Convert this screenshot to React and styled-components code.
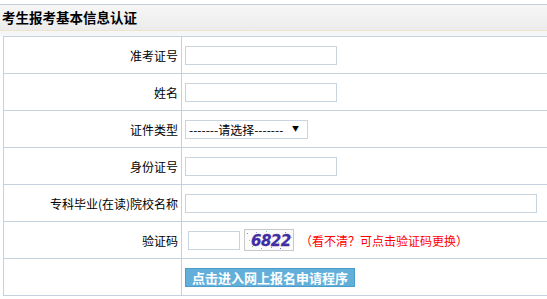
import React from 'react';
import styled, { createGlobalStyle } from 'styled-components';

const GlobalStyle = createGlobalStyle`
  html, body {
    margin: 0;
    padding: 0;
    background: #fff;
    overflow: hidden;
  }
  body {
    font-family: "Noto Sans CJK SC", "Liberation Sans", sans-serif;
    font-size: 12px;
    color: #000;
  }
  * { box-sizing: border-box; }
`;

const Page = styled.div`
  width: 100%;
  padding-top: 4px;
`;

const Header = styled.div`
  height: 27px;
  border-top: 1px solid #bfd0dc;
  border-bottom: 1px solid #efe3c9;
  background: linear-gradient(#f6f6f6, #ececec);
  display: flex;
  align-items: center;
  padding-left: 2px;
`;

const Title = styled.h3`
  margin: 0;
  font-size: 13.5px;
  font-weight: bold;
  line-height: 1;
`;

const Strip = styled.div`
  height: 5px;
  background: #f5f6f8;
`;

const Form = styled.div`
  margin-left: 3px;
  border-left: 1px solid #c3d2de;
  border-top: 1px solid #c3d2de;
`;

const Row = styled.div`
  display: grid;
  grid-template-columns: 178px 1fr;
  height: 37px;
  border-bottom: 1px solid #c3d2de;
`;

const Label = styled.label`
  border-right: 1px solid #c3d2de;
  display: flex;
  align-items: center;
  justify-content: flex-end;
  padding-right: 3px;
`;

const Field = styled.div`
  display: flex;
  align-items: center;
  padding-left: 3px;
`;

const Input = styled.input`
  width: ${(p) => p.w || 152}px;
  height: 19px;
  margin: 0 0 0 ${(p) => p.ml || 0}px;
  border: 1px solid #c6d5e0;
  padding: 0 3px;
  font: inherit;
  outline: none;
`;

const SelectBox = styled.div`
  position: relative;
  width: 123px;
  height: 19px;
`;

const Select = styled.select`
  appearance: none;
  width: 100%;
  height: 100%;
  border: 1px solid #c6d5e0;
  background: #fff;
  padding: 0 0 0 3px;
  font: inherit;
  font-size: 12px;
  color: #000;
  outline: none;
`;

const Arrow = styled.span`
  position: absolute;
  right: 9px;
  top: 5px;
  font-size: 7px;
  line-height: 1;
  pointer-events: none;
`;

const Captcha = styled.svg`
  display: block;
  margin-left: 4px;
  cursor: pointer;
`;

const Hint = styled.span`
  color: #f00;
  margin-left: 6px;
`;

const Submit = styled.button`
  width: 170px;
  height: 19px;
  padding: 0;
  border: 1px solid #4c9ccb;
  background: #62b0da;
  color: #fff;
  font: inherit;
  font-size: 13px;
  font-weight: bold;
  line-height: 17px;
  cursor: pointer;
`;

const dots = [
  [3, 4, '#c6c'], [8, 17, '#6c6'], [12, 3, '#99c'], [17, 19, '#c96'],
  [22, 2, '#6cc'], [27, 18, '#c6c'], [31, 5, '#9c6'], [36, 19, '#66c'],
  [41, 3, '#c69'], [45, 16, '#6c9'], [47, 8, '#c9c'], [5, 11, '#9cc'],
  [14, 12, '#cc6'], [25, 9, '#c99'], [34, 13, '#9c9'], [43, 11, '#99f'],
  [19, 6, '#f9c'], [39, 7, '#9cf'], [10, 8, '#fc9'], [29, 15, '#c9f'],
];

const CaptchaImage = () => (
  <Captcha width="50" height="22" viewBox="0 0 50 22">
    <rect x="0.5" y="0.5" width="49" height="21" fill="#fbfbfb" stroke="#c8c8c8" />
    {dots.map(([x, y, c], i) => (
      <rect key={i} x={x} y={y} width="1" height="1" fill={c} />
    ))}
    <text
      x="7"
      y="17"
      fontFamily="'DejaVu Sans', sans-serif"
      fontSize="15"
      fontWeight="bold"
      fontStyle="italic"
      fill="#3a2fa8"
      stroke="#5a2b8a"
      strokeWidth="0.3"
      letterSpacing="-0.5"
    >
      6822
    </text>
  </Captcha>
);

const rows = [
  { label: '准考证号', field: <Input /> },
  { label: '姓名', field: <Input /> },
  {
    label: '证件类型',
    field: (
      <SelectBox>
        <Select defaultValue="">
          <option value="">-------请选择-------</option>
        </Select>
        <Arrow>▼</Arrow>
      </SelectBox>
    ),
  },
  { label: '身份证号', field: <Input /> },
  { label: '专科毕业(在读)院校名称', field: <Input w={352} /> },
  {
    label: '验证码',
    field: (
      <>
        <Input w={52} ml={3} />
        <CaptchaImage />
        <Hint>（看不清？可点击验证码更换）</Hint>
      </>
    ),
  },
  { label: '', field: <Submit type="button">点击进入网上报名申请程序</Submit> },
];

export default function App() {
  return (
    <>
      <GlobalStyle />
      <Page>
        <Header>
          <Title>考生报考基本信息认证</Title>
        </Header>
        <Strip />
        <Form>
          {rows.map((r, i) => (
            <Row key={i}>
              <Label>{r.label}</Label>
              <Field>{r.field}</Field>
            </Row>
          ))}
        </Form>
      </Page>
    </>
  );
}
